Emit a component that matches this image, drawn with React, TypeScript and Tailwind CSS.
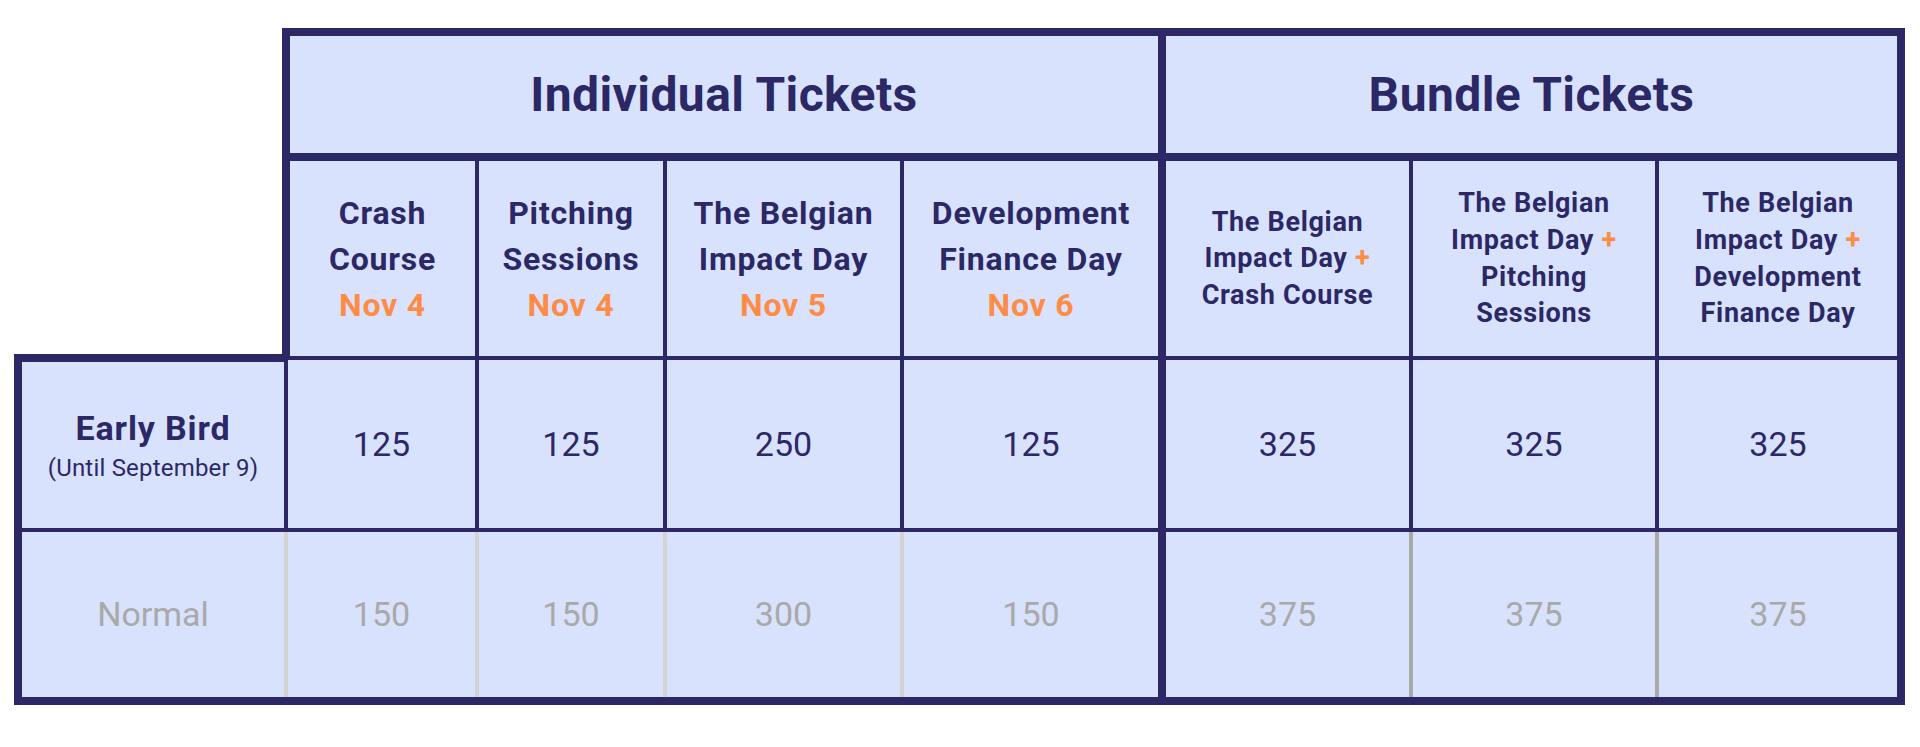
const navy = "border-[#2c2866]";

type Col = {
  head: React.ReactNode;
  early: string;
  normal: string;
  w2: string;
  w3: string;
  r: string;
  rn: string;
  bundle?: boolean;
};

const Plus = () => <span className="text-[#fe8c45]">+</span>;

const cols: Col[] = [
  {
    head: (
      <>
        Crash
        <br />
        Course
        <br />
        <span className="text-[#fe8c45]">Nov 4</span>
      </>
    ),
    early: "125",
    normal: "150",
    w2: "w-[197px] border-l-[8px]",
    w3: "w-[191px]",
    r: "border-r-[4px] border-r-[#2c2866]",
    rn: "border-r-[4px] border-r-[#d3d3d3]",
  },
  {
    head: (
      <>
        Pitching
        <br />
        Sessions
        <br />
        <span className="text-[#fe8c45]">Nov 4</span>
      </>
    ),
    early: "125",
    normal: "150",
    w2: "w-[188px]",
    w3: "w-[188px]",
    r: "border-r-[4px] border-r-[#2c2866]",
    rn: "border-r-[4px] border-r-[#d3d3d3]",
  },
  {
    head: (
      <>
        The Belgian
        <br />
        Impact Day
        <br />
        <span className="text-[#fe8c45]">Nov 5</span>
      </>
    ),
    early: "250",
    normal: "300",
    w2: "w-[237px]",
    w3: "w-[237px]",
    r: "border-r-[4px] border-r-[#2c2866]",
    rn: "border-r-[4px] border-r-[#d3d3d3]",
  },
  {
    head: (
      <>
        Development
        <br />
        Finance Day
        <br />
        <span className="text-[#fe8c45]">Nov 6</span>
      </>
    ),
    early: "125",
    normal: "150",
    w2: "w-[262px]",
    w3: "w-[262px]",
    r: "border-r-[8px] border-r-[#2c2866]",
    rn: "border-r-[8px] border-r-[#2c2866]",
  },
  {
    head: (
      <>
        The Belgian
        <br />
        Impact Day <Plus />
        <br />
        Crash Course
      </>
    ),
    early: "325",
    normal: "375",
    w2: "w-[247px]",
    w3: "w-[247px]",
    r: "border-r-[4px] border-r-[#2c2866]",
    rn: "border-r-[4px] border-r-[#a9a9a9]",
    bundle: true,
  },
  {
    head: (
      <>
        The Belgian
        <br />
        Impact Day <Plus />
        <br />
        Pitching
        <br />
        Sessions
      </>
    ),
    early: "325",
    normal: "375",
    w2: "w-[246px]",
    w3: "w-[246px]",
    r: "border-r-[4px] border-r-[#2c2866]",
    rn: "border-r-[4px] border-r-[#a9a9a9]",
    bundle: true,
  },
  {
    head: (
      <>
        The Belgian
        <br />
        Impact Day <Plus />
        <br />
        Development
        <br />
        Finance Day
      </>
    ),
    early: "325",
    normal: "375",
    w2: "w-[246px]",
    w3: "w-[246px]",
    r: "border-r-[8px] border-r-[#2c2866]",
    rn: "border-r-[8px] border-r-[#2c2866]",
    bundle: true,
  },
];

export default function App() {
  return (
    <div className="min-h-[747px] w-full bg-white pl-[14px] pt-[28px] font-[Roboto,'Liberation_Sans',sans-serif] text-[#2c2866]">
      <div className="flex w-[1891px] flex-col">
        {/* Group header row */}
        <div className="flex h-[133px]">
          <div className="w-[268px] shrink-0" />
          <div className={`flex w-[884px] shrink-0 items-center justify-center border-[8px] ${navy} bg-[#d8e2fd] text-[48px] font-bold tracking-[0.4px]`}>
            Individual Tickets
          </div>
          <div className={`flex w-[739px] shrink-0 items-center justify-center border-y-[8px] border-r-[8px] ${navy} bg-[#d8e2fd] text-[48px] font-bold tracking-[0.4px]`}>
            Bundle Tickets
          </div>
        </div>

        {/* Column header row */}
        <div className="flex h-[199px]">
          <div className="h-full w-[268px] shrink-0 border-b-[6px] border-[#2c2866] bg-white" />
          {cols.map((c, i) => (
            <div
              key={i}
              className={`flex h-full shrink-0 items-center justify-center border-b-[4px] ${navy} ${c.w2} ${c.r} bg-[#d8e2fd] text-center font-bold tracking-wide ${
                c.bundle ? "text-[27px] leading-[36.6px]" : "text-[32px] leading-[46px]"
              }`}
            >
              <div>{c.head}</div>
            </div>
          ))}
        </div>

        {/* Early bird row */}
        <div className="flex h-[172px]">
          <div className={`flex h-full w-[274px] shrink-0 flex-col items-center justify-center border-l-[8px] border-t-[2px] border-b-[4px] border-r-[4px] ${navy} bg-[#d8e2fd] pt-[5px] text-center`}>
            <div className="text-[34px] font-bold leading-[40px] tracking-wide">Early Bird</div>
            <div className="text-[24px] leading-[40px] tracking-[0.2px]">(Until September 9)</div>
          </div>
          {cols.map((c, i) => (
            <div
              key={i}
              className={`flex h-full shrink-0 items-center justify-center border-b-[4px] ${navy} ${c.w3} ${c.r} bg-[#d8e2fd] text-[34px]`}
            >
              {c.early}
            </div>
          ))}
        </div>

        {/* Normal row */}
        <div className="flex h-[165px]">
          <div className="flex h-full w-[274px] shrink-0 items-center justify-center border-l-[8px] border-l-[#2c2866] border-r-[4px] border-r-[#d3d3d3] bg-[#d8e2fd] text-[34px] text-[#a9a9a9]">
            Normal
          </div>
          {cols.map((c, i) => (
            <div
              key={i}
              className={`flex h-full shrink-0 items-center justify-center ${c.w3} ${c.rn} bg-[#d8e2fd] text-[34px] text-[#a9a9a9]`}
            >
              {c.normal}
            </div>
          ))}
        </div>
        <div className="h-[8px] w-[1891px] bg-[#2c2866]" />
      </div>
    </div>
  );
}
